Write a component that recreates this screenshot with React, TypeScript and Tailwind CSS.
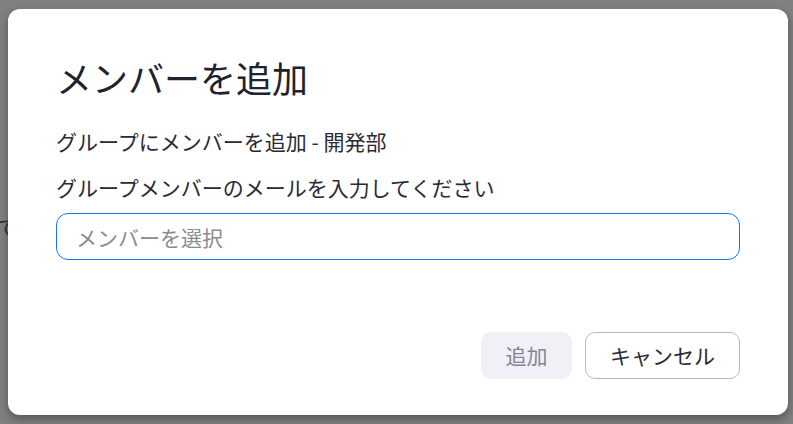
import React from "react";

const font = { fontFamily: '"Noto Sans CJK JP", "Noto Sans", sans-serif' };

export default function App() {
  return (
    <div
      className="relative w-[793px] h-[424px] overflow-hidden bg-[#808080]"
      style={font}
    >
      {/* page content under the overlay */}
      <span className="absolute left-[-3px] top-[211px] text-[21px] leading-[30px] text-[#30303e]">
        で
      </span>

      {/* dialog */}
      <div className="absolute left-[8px] top-[9px] w-[780px] h-[406px] flex flex-col rounded-[12px] bg-white pl-[48px] pr-[48px] pb-[36px] shadow-[0_4px_10px_rgba(0,0,0,0.35)]">
        <h2 className="mt-[47px] text-[36px] leading-[43px] font-normal text-[#22222e]">
          メンバーを追加
        </h2>
        <p className="mt-[27px] text-[21px] leading-[30px] text-[#2a2a36]">
          グループにメンバーを追加 - 開発部
        </p>
        <label className="mt-[16px] text-[21px] leading-[30px] text-[#2a2a36]">
          グループメンバーのメールを入力してください
        </label>
        <input
          type="text"
          placeholder="メンバーを選択"
          className="mt-[11px] h-[47px] w-full rounded-[12px] border border-[#1a73e8] pl-[19px] text-[21px] text-[#2a2a36] outline-none placeholder:text-[#8c8c8c]"
        />
        <div className="flex-1" />
        <div className="flex justify-end gap-[13px]">
          <button
            type="button"
            disabled
            className="h-[47px] w-[91px] rounded-[10px] bg-[#f1f0f6] text-[21px] text-[#85849a]"
          >
            追加
          </button>
          <button
            type="button"
            className="h-[47px] w-[155px] rounded-[10px] border border-[#b8b7cc] bg-white text-[21px] text-[#2a2a36]"
          >
            キャンセル
          </button>
        </div>
      </div>
    </div>
  );
}
